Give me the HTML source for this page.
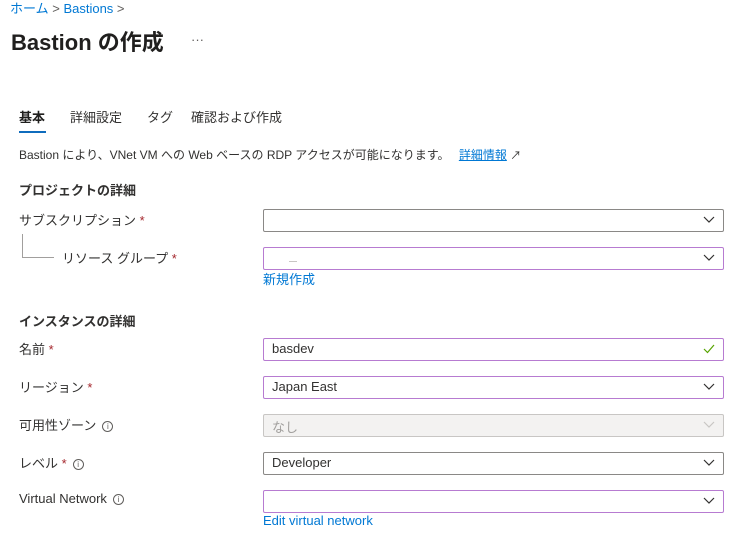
<!DOCTYPE html>
<html><head><meta charset="utf-8"><style>
*{margin:0;padding:0;box-sizing:border-box}
body{width:756px;height:537px;background:#fff;position:relative;overflow:hidden;font-family:"Liberation Sans","Noto Sans CJK JP",sans-serif;color:#323130;font-size:13px}
.a{position:absolute;white-space:nowrap}
.lnk{color:#0078d4}
.req{color:#a4262c}
.box{position:absolute;left:263px;width:461px;height:23px;border:1px solid #8a8886;border-radius:2px;background:#fff}
.p{border:1.5px solid #b77bd1}
.box .t{position:absolute;left:8px;top:2px;font-size:13px}
.chev{position:absolute;right:8px;top:6px}
.info{display:inline-block;width:11px;height:11px;border:1px solid #605e5c;border-radius:50%;font-size:8px;line-height:9px;text-align:center;vertical-align:1px;margin-left:6px;color:#605e5c}
.h{font-weight:bold;font-size:13px}
</style></head><body>
<div class="a lnk" style="left:10px;top:-2px;font-size:13px">ホーム <span style="color:#605e5c">&gt;</span> Bastions <span style="color:#605e5c">&gt;</span></div>
<div class="a" style="left:11px;top:25px;font-size:22px;font-weight:600;color:#201f1e">Bastion の作成</div>
<div class="a" style="left:191px;top:32px;color:#605e5c">···</div>
<div class="a h" style="left:19px;top:107px;color:#201f1e">基本</div>
<div style="position:absolute;left:19px;top:131px;width:27px;height:2px;background:#0f6cbd"></div>
<div class="a" style="left:70px;top:107px">詳細設定</div>
<div class="a" style="left:147px;top:107px">タグ</div>
<div class="a" style="left:191px;top:107px">確認および作成</div>
<div class="a" style="left:19px;top:146px;font-size:12px">Bastion により、VNet VM への Web ベースの RDP アクセスが可能になります。 <span class="lnk" style="text-decoration:underline;margin-left:6px">詳細情報</span> <span style="font-size:11px">↗</span></div>
<div class="a h" style="left:19px;top:180px">プロジェクトの詳細</div>
<div class="a" style="left:19px;top:210px">サブスクリプション <span class="req">*</span></div>
<div style="position:absolute;left:22px;top:234px;width:1px;height:23px;background:#a19f9d"></div>
<div style="position:absolute;left:22px;top:257px;width:32px;height:1px;background:#a19f9d"></div>
<div class="a" style="left:62px;top:248px">リソース グループ <span class="req">*</span></div>
<div class="box" style="top:209px"><svg class="chev" width="12" height="8"><path d="M1 1l5 5 5-5" stroke="#323130" fill="none" stroke-width="1.2"/></svg></div>
<div class="box p" style="top:247px"><div class="a" style="left:25px;top:13px;width:8px;height:1px;background:#c8c6c4"></div><svg class="chev" width="12" height="8"><path d="M1 1l5 5 5-5" stroke="#323130" fill="none" stroke-width="1.2"/></svg></div>
<div class="a lnk" style="left:263px;top:269px">新規作成</div>
<div class="a h" style="left:19px;top:311px">インスタンスの詳細</div>
<div class="a" style="left:19px;top:339px">名前 <span class="req">*</span></div>
<div class="box p" style="top:338px"><span class="t">basdev</span><svg class="chev" width="12" height="10" style="top:5px"><path d="M1 5l3.5 3.5L11 1" stroke="#57a300" fill="none" stroke-width="1.2"/></svg></div>
<div class="a" style="left:19px;top:377px">リージョン <span class="req">*</span></div>
<div class="box p" style="top:376px"><span class="t">Japan East</span><svg class="chev" width="12" height="8"><path d="M1 1l5 5 5-5" stroke="#323130" fill="none" stroke-width="1.2"/></svg></div>
<div class="a" style="left:19px;top:415px">可用性ゾーン<span class="info">i</span></div>
<div class="box" style="top:414px;background:#f3f2f1;border-color:#c8c6c4"><span class="t" style="color:#a19f9d">なし</span><svg class="chev" width="12" height="8"><path d="M1 1l5 5 5-5" stroke="#c8c6c4" fill="none" stroke-width="1.2"/></svg></div>
<div class="a" style="left:19px;top:453px">レベル <span class="req">*</span><span class="info">i</span></div>
<div class="box" style="top:452px"><span class="t">Developer</span><svg class="chev" width="12" height="8"><path d="M1 1l5 5 5-5" stroke="#323130" fill="none" stroke-width="1.2"/></svg></div>
<div class="a" style="left:19px;top:491px">Virtual Network<span class="info">i</span></div>
<div class="box p" style="top:490px"><svg class="chev" width="12" height="8"><path d="M1 1l5 5 5-5" stroke="#323130" fill="none" stroke-width="1.2"/></svg></div>
<div class="a lnk" style="left:263px;top:513px">Edit virtual network</div>
</body></html>
